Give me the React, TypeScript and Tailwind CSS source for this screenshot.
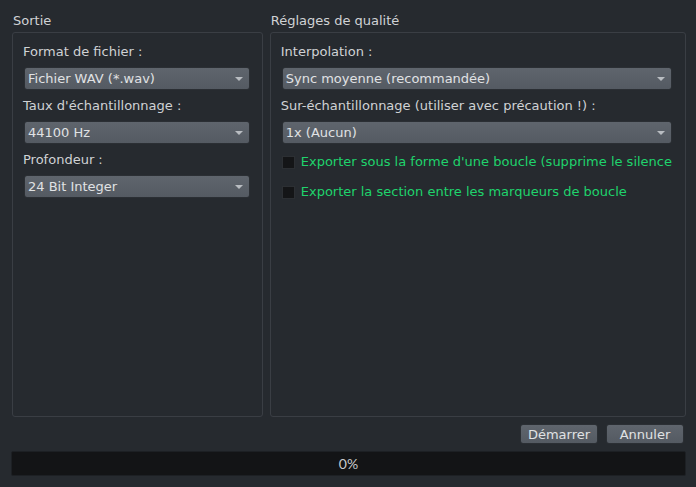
const font = "font-['DejaVu_Sans',sans-serif]";

function Combo({ value }: { value: string }) {
  return (
    <div className="flex h-[23px] items-center justify-between rounded-[3px] border border-[#2b2f34] bg-gradient-to-b from-[#5f656d] to-[#545a62] pl-[3px] pr-[6px] text-[13px] text-[#e0e2e4]">
      <span>{value}</span>
      <svg width="8" height="4" viewBox="0 0 8 4">
        <path d="M0 0h8L4 4z" fill="#b9bdc2" />
      </svg>
    </div>
  );
}

function Field({ label, value }: { label: string; value: string }) {
  return (
    <div className="flex flex-col">
      <div className="-ml-[1px] h-[31px] pt-[8px] text-[13px] leading-[15px] text-[#d0d2d5]">{label}</div>
      <Combo value={value} />
    </div>
  );
}

function Check({ label }: { label: string }) {
  return (
    <div className="flex h-[30px] items-center gap-[6px] whitespace-nowrap">
      <div className="h-[13px] w-[13px] border border-[#2c2f33] bg-[#141517]" />
      <span className="text-[13px] text-[#1fd36c]">{label}</span>
    </div>
  );
}

export default function App() {
  return (
    <div className={`${font} flex h-[487px] w-[696px] flex-col bg-[#262a2f] pl-[12px] pr-[10px] pt-[12px]`}>
      <div className="flex h-[405px] gap-[7px]">
        <div className="flex w-[252px] flex-col">
          <div className="h-[20px] pl-[1px] text-[13px] leading-[18px] text-[#d0d2d5]">Sortie</div>
          <div className="flex-1 rounded-[3px] border border-[#3a3e44] pl-[11px] pr-[12px] pt-[3px]">
            <Field label="Format de fichier :" value="Fichier WAV (*.wav)" />
            <Field label="Taux d'échantillonnage :" value="44100 Hz" />
            <Field label="Profondeur :" value="24 Bit Integer" />
          </div>
        </div>
        <div className="flex flex-1 flex-col">
          <div className="h-[20px] pl-[1px] text-[13px] leading-[18px] text-[#d0d2d5]">Réglages de qualité</div>
          <div className="flex-1 overflow-hidden rounded-[3px] border border-[#3a3e44] pl-[11px] pr-[13px] pt-[3px]">
            <Field label="Interpolation :" value="Sync moyenne (recommandée)" />
            <Field label="Sur-échantillonnage (utiliser avec précaution !) :" value="1x (Aucun)" />
            <div className="mt-[3px]">
              <Check label="Exporter sous la forme d'une boucle (supprime le silence" />
              <Check label="Exporter la section entre les marqueurs de boucle" />
            </div>
          </div>
        </div>
      </div>
      <div className="mt-[7px] flex justify-end gap-[8px] pr-[2px]">
        <button className="h-[20px] w-[78px] rounded-[3px] border border-[#2b2f34] bg-gradient-to-b from-[#5f656d] to-[#545a62] text-[13px] leading-none text-[#e0e2e4]">
          Démarrer
        </button>
        <button className="h-[20px] w-[78px] rounded-[3px] border border-[#2b2f34] bg-gradient-to-b from-[#5f656d] to-[#545a62] text-[13px] leading-none text-[#e0e2e4]">
          Annuler
        </button>
      </div>
      <div className="-ml-[1px] mt-[7px] flex h-[25px] items-center justify-center rounded-[2px] border border-[#1d2024] bg-[#131416] font-['Lato',sans-serif] text-[14px] text-[#c8cacd]">
        0%
      </div>
    </div>
  );
}
